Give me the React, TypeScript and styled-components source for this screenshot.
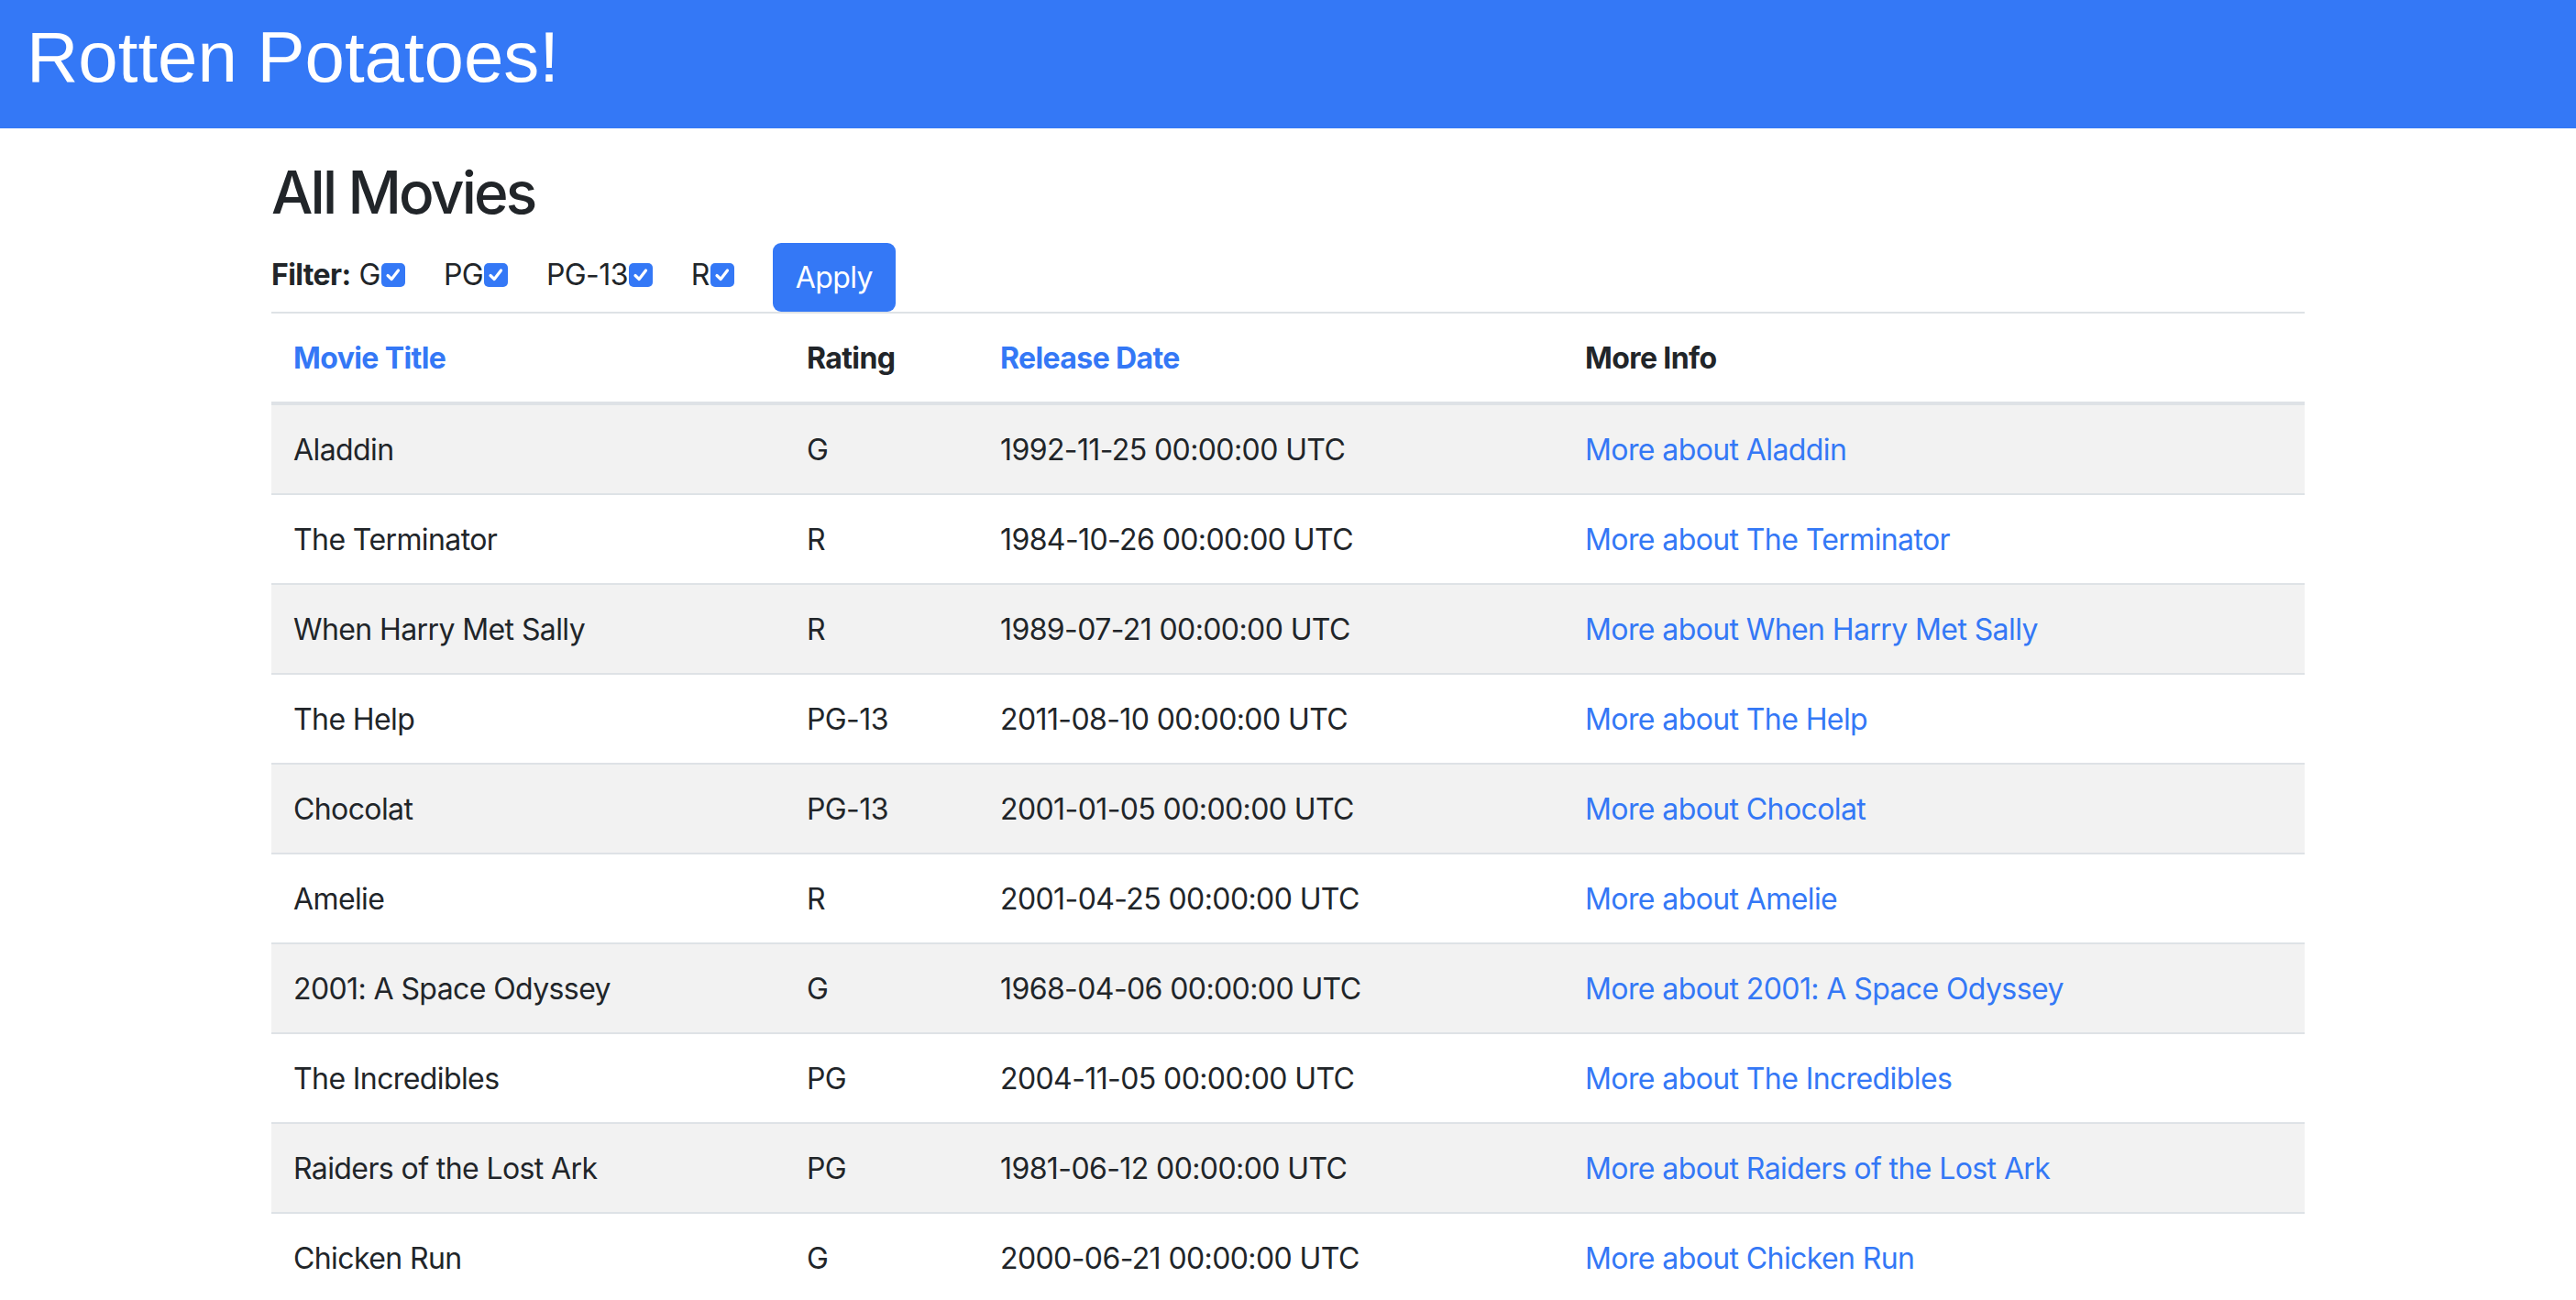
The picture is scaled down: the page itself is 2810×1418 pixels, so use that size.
import React, { useState } from "react";
import styled, { createGlobalStyle } from "styled-components";

const GlobalStyle = createGlobalStyle`
  body {
    margin: 0;
    background: #fff;
    font-family: Inter, "Noto Sans", sans-serif;
    letter-spacing: -0.6px;
    color: #212529;
  }
`;

const blue = "#3478f6";

const Header = styled.header`
  height: 140px;
  background: ${blue};
  padding: 18px 0 0 29px;
  box-sizing: border-box;
`;

const Brand = styled.h1`
  margin: 0;
  font-family: "Liberation Sans", Arial, sans-serif;
  font-size: 78px;
  line-height: 1.15;
  font-weight: 400;
  letter-spacing: 0;
  color: #fff;
`;

const Main = styled.main`
  width: 2218px;
  margin: 0 auto;
`;

const Title = styled.h2`
  margin: 32px 0 0;
  font-size: 64px;
  line-height: 1.2;
  font-weight: 500;
  letter-spacing: -2.8px;
`;

const FilterForm = styled.form`
  display: flex;
  align-items: center;
  height: 75px;
  margin-top: 16px;
  gap: 42px;
`;

const FilterLabel = styled.label`
  display: flex;
  align-items: center;
  font-size: 32px;
  line-height: 48px;
  padding-bottom: 4px;
  cursor: pointer;
`;

const Strong = styled.strong`
  font-weight: 700;
  margin-right: 9px;
`;

const Box = styled.span<{ $on: boolean }>`
  display: inline-flex;
  flex: none;
  align-items: center;
  justify-content: center;
  width: 26px;
  height: 26px;
  margin-left: 1px;
  border-radius: 5px;
  box-sizing: border-box;
  background: ${(p) => (p.$on ? blue : "#fff")};
  border: ${(p) => (p.$on ? "none" : "2px solid #8e8e93")};
`;

const ApplyButton = styled.button`
  width: 134px;
  height: 75px;
  border: none;
  border-radius: 9px;
  background: ${blue};
  color: #fff;
  font-family: inherit;
  letter-spacing: inherit;
  font-size: 32px;
  cursor: pointer;
`;

const Table = styled.table`
  width: 100%;
  border-collapse: collapse;
  table-layout: fixed;
  font-size: 32px;
  line-height: 48px;
`;

const Th = styled.th`
  text-align: left;
  font-weight: 700;
  padding: 25px 24px 23px;
  border-top: 2px solid #dee2e6;
  border-bottom: 4px solid #dee2e6;
`;

const Row = styled.tr<{ $striped: boolean }>`
  background: ${(p) => (p.$striped ? "#f2f2f2" : "transparent")};
`;

const Td = styled.td`
  padding: 25px 24px 23px;
  border-top: 2px solid #dee2e6;
  white-space: nowrap;
`;

const Link = styled.a`
  color: ${blue};
  text-decoration: none;
`;

const movies = [
  { title: "Aladdin", rating: "G", date: "1992-11-25 00:00:00 UTC" },
  { title: "The Terminator", rating: "R", date: "1984-10-26 00:00:00 UTC" },
  { title: "When Harry Met Sally", rating: "R", date: "1989-07-21 00:00:00 UTC" },
  { title: "The Help", rating: "PG-13", date: "2011-08-10 00:00:00 UTC" },
  { title: "Chocolat", rating: "PG-13", date: "2001-01-05 00:00:00 UTC" },
  { title: "Amelie", rating: "R", date: "2001-04-25 00:00:00 UTC" },
  { title: "2001: A Space Odyssey", rating: "G", date: "1968-04-06 00:00:00 UTC" },
  { title: "The Incredibles", rating: "PG", date: "2004-11-05 00:00:00 UTC" },
  { title: "Raiders of the Lost Ark", rating: "PG", date: "1981-06-12 00:00:00 UTC" },
  { title: "Chicken Run", rating: "G", date: "2000-06-21 00:00:00 UTC" },
];

const ratings = ["G", "PG", "PG-13", "R"];

function Check({ on }: { on: boolean }) {
  return (
    <Box $on={on}>
      {on && (
        <svg width="20" height="20" viewBox="0 0 20 20">
          <path d="M4 10.5 L8.2 14.5 L15.5 5" fill="none" stroke="#fff" strokeWidth="3.2" strokeLinecap="round" strokeLinejoin="round" />
        </svg>
      )}
    </Box>
  );
}

export default function App() {
  const [checked, setChecked] = useState<string[]>(ratings);
  const toggle = (r: string) => {
    setChecked(checked.includes(r) ? checked.filter((x) => x !== r) : [...checked, r]);
  };

  return (
    <>
      <GlobalStyle />
      <Header>
        <Brand>Rotten Potatoes!</Brand>
      </Header>
      <Main>
        <Title>All Movies</Title>
        <FilterForm onSubmit={(e) => e.preventDefault()}>
          {ratings.map((r, i) => (
            <FilterLabel key={r} onClick={() => toggle(r)}>
              {i === 0 && <Strong>Filter:</Strong>}
              {r}
              <Check on={checked.includes(r)} />
            </FilterLabel>
          ))}
          <ApplyButton type="submit">Apply</ApplyButton>
        </FilterForm>
        <Table>
          <colgroup>
            <col style={{ width: 560 }} />
            <col style={{ width: 211 }} />
            <col style={{ width: 638 }} />
            <col style={{ width: 809 }} />
          </colgroup>
          <thead>
            <tr>
              <Th><Link href="#">Movie Title</Link></Th>
              <Th>Rating</Th>
              <Th><Link href="#">Release Date</Link></Th>
              <Th>More Info</Th>
            </tr>
          </thead>
          <tbody>
            {movies.map((m, i) => (
              <Row key={m.title} $striped={i % 2 === 0}>
                <Td>{m.title}</Td>
                <Td>{m.rating}</Td>
                <Td>{m.date}</Td>
                <Td><Link href="#">More about {m.title}</Link></Td>
              </Row>
            ))}
          </tbody>
        </Table>
      </Main>
    </>
  );
}
